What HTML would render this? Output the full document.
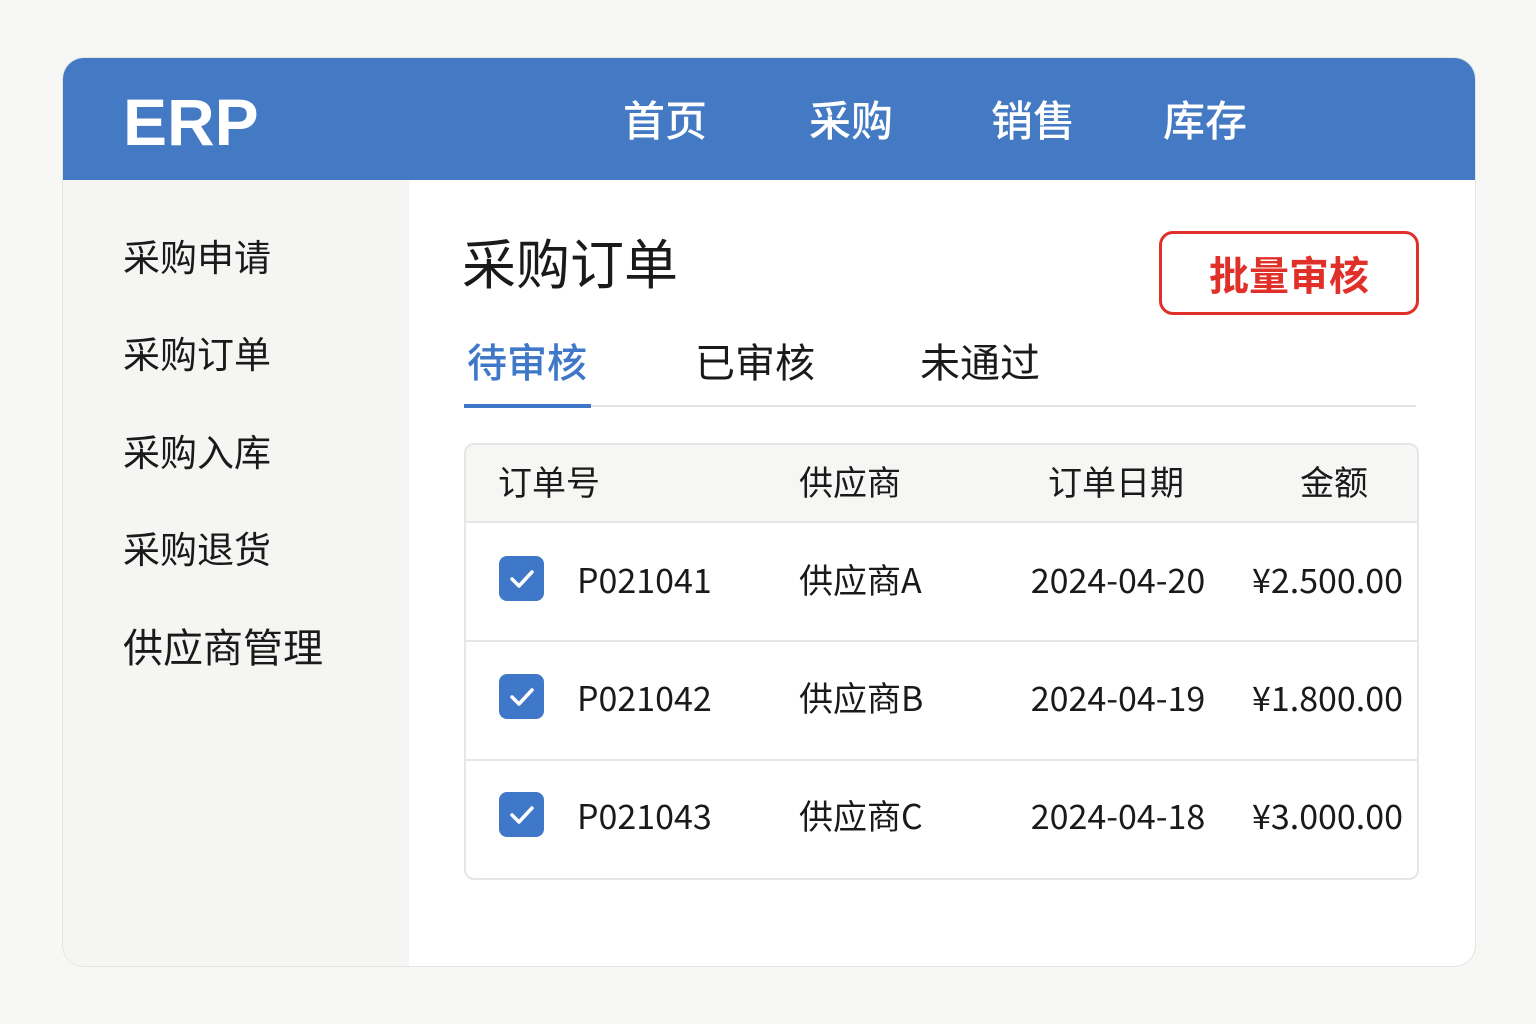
<!DOCTYPE html>
<html><head><meta charset="utf-8"><style>
*{margin:0;padding:0;box-sizing:border-box}
body{width:1536px;height:1024px;background:#f7f7f5;font-family:"Liberation Sans","Noto Sans CJK SC",sans-serif;position:relative;overflow:hidden;color:#1a1a1a}
.card{position:absolute;left:62px;top:57px;width:1414px;height:910px;background:#fff;border-radius:22px;border:1px solid #e4e4e2;overflow:hidden}
.hdr{position:absolute;left:0;top:0;width:100%;height:122px;background:#4479c4}
.abs{position:absolute;white-space:nowrap;line-height:1}
.cj{font-family:"Noto Sans CJK SC",sans-serif}
.side{position:absolute;left:0;top:122px;width:346px;height:790px;background:#f5f5f3}
.si{font-size:37px;left:123px;font-family:"Noto Sans CJK SC",sans-serif}
.th{font-size:34px;top:464px;font-family:"Noto Sans CJK SC",sans-serif}
.td{font-size:34px;font-family:"Noto Sans CJK SC",sans-serif}
.cb{position:absolute;left:499px;width:45px;height:45px;background:#3f78c8;border-radius:8px}
.row{position:absolute;left:465px;width:952px;height:2px;background:#e6e6e4}
</style></head><body>
<div class="card">
<div class="hdr"></div>
<div class="side"></div>
</div>
<div class="abs" style="left:123px;top:89px;font-size:66px;font-weight:bold;color:#fff">ERP</div>
<div class="abs cj" style="left:623px;top:98px;font-size:42px;color:#fff;font-weight:500">首页</div>
<div class="abs cj" style="left:809px;top:98px;font-size:42px;color:#fff;font-weight:500">采购</div>
<div class="abs cj" style="left:991px;top:98px;font-size:42px;color:#fff;font-weight:500">销售</div>
<div class="abs cj" style="left:1163px;top:98px;font-size:42px;color:#fff;font-weight:500">库存</div>
<div class="abs si" style="top:237px">采购申请</div>
<div class="abs si" style="top:334px">采购订单</div>
<div class="abs si" style="top:432px">采购入库</div>
<div class="abs si" style="top:529px">采购退货</div>
<div class="abs si" style="top:625px;font-size:40px">供应商管理</div>
<div class="abs cj" style="left:462px;top:234px;font-size:54px">采购订单</div>
<div class="abs cj" style="left:1159px;top:231px;width:260px;height:84px;border:3px solid #e0302a;border-radius:14px;color:#e0302a;font-size:40px;font-weight:bold;text-align:center;line-height:78px">批量审核</div>
<div class="abs cj" style="left:467px;top:340px;font-size:40px;color:#3f78c8;font-weight:500">待审核</div>
<div class="abs cj" style="left:695px;top:340px;font-size:40px">已审核</div>
<div class="abs cj" style="left:920px;top:340px;font-size:40px">未通过</div>
<div class="abs" style="left:464px;top:405px;width:952px;height:2px;background:#e4e4e2"></div>
<div class="abs" style="left:464px;top:404px;width:127px;height:4px;background:#3f78c8"></div>
<div class="abs" style="left:464px;top:443px;width:955px;height:437px;border:2px solid #e6e6e4;border-radius:10px;overflow:hidden"><div style="height:78px;background:#f6f6f4"></div></div>
<div class="abs th" style="left:498px">订单号</div>
<div class="abs th" style="left:799px">供应商</div>
<div class="abs th" style="left:1048px">订单日期</div>
<div class="abs th" style="left:1300px">金额</div>
<div class="row" style="top:521px"></div>
<div class="row" style="top:640px"></div>
<div class="row" style="top:759px"></div>
<div class="cb" style="top:556px"><svg width="45" height="45"><path d="M13 23l7 7 13-14" stroke="#fff" stroke-width="3.5" fill="none" stroke-linecap="round" stroke-linejoin="round"/></svg></div>
<div class="cb" style="top:674px"><svg width="45" height="45"><path d="M13 23l7 7 13-14" stroke="#fff" stroke-width="3.5" fill="none" stroke-linecap="round" stroke-linejoin="round"/></svg></div>
<div class="cb" style="top:792px"><svg width="45" height="45"><path d="M13 23l7 7 13-14" stroke="#fff" stroke-width="3.5" fill="none" stroke-linecap="round" stroke-linejoin="round"/></svg></div>
<div class="abs td" style="left:577px;top:562px">P021041</div>
<div class="abs td" style="left:799px;top:562px">供应商A</div>
<div class="abs td" style="left:1018px;top:562px;width:200px;text-align:center">2024-04-20</div>
<div class="abs td" style="left:1213px;top:562px;width:190px;text-align:right">¥2.500.00</div>
<div class="abs td" style="left:577px;top:680px">P021042</div>
<div class="abs td" style="left:799px;top:680px">供应商B</div>
<div class="abs td" style="left:1018px;top:680px;width:200px;text-align:center">2024-04-19</div>
<div class="abs td" style="left:1213px;top:680px;width:190px;text-align:right">¥1.800.00</div>
<div class="abs td" style="left:577px;top:798px">P021043</div>
<div class="abs td" style="left:799px;top:798px">供应商C</div>
<div class="abs td" style="left:1018px;top:798px;width:200px;text-align:center">2024-04-18</div>
<div class="abs td" style="left:1213px;top:798px;width:190px;text-align:right">¥3.000.00</div>
</body></html>
